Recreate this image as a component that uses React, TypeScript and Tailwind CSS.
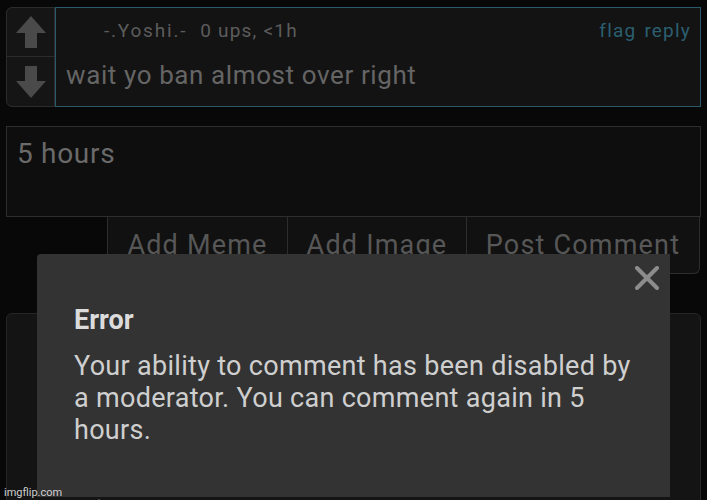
import React from "react";

function Arrow({ down }: { down?: boolean }) {
    return (
        <svg
            width="30"
            height="32"
            viewBox="0 0 30 32"
            className={down ? "rotate-180" : ""}
        >
            <path d="M15 0 L30 17 L21 17 L21 32 L9 32 L9 17 L0 17 Z" fill="#4a4a4a" />
        </svg>
    );
}

export default function App() {
    return (
        <div
            className="relative w-[707px] h-[500px] overflow-hidden bg-[#080808]"
            style={{ fontFamily: "Roboto, 'Liberation Sans', sans-serif" }}
        >
            {/* comment */}
            <div className="flex mx-[6px] mt-[7px] h-[100px]">
                <div className="w-[49px] flex flex-col border border-[#2c2c2c] rounded-l-md bg-[#151515]">
                    <div className="h-1/2 flex items-center justify-center border-b border-[#2c2c2c]">
                        <Arrow />
                    </div>
                    <div className="h-1/2 flex items-center justify-center">
                        <Arrow down />
                    </div>
                </div>
                <div className="flex-1 border border-[#2a5a69] bg-[#131313] flex flex-col">
                    <div className="flex items-center h-[47px] pl-[48px] pr-[9px] text-[19px] tracking-[1.2px] text-[#5c5c5c]">
                        <span className="tracking-[1.8px]">-.Yoshi.-</span>
                        <span className="ml-[13px]">0 ups, &lt;1h</span>
                        <span className="ml-auto text-[#2b5f70]">flag</span>
                        <span className="ml-[8px] text-[#2b5f70]">reply</span>
                    </div>
                    <div className="pl-[10px] pt-[5px] text-[26px] tracking-[0.6px] text-[#656565] leading-[30px]">
                        wait yo ban almost over right
                    </div>
                </div>
            </div>

            {/* textarea */}
            <div className="mx-[6px] mt-[19px] h-[91px] border border-[#2d2d2d] bg-[#0e0e0e] pl-[10px] pt-[11px] text-[28px] tracking-[0.7px] leading-[32px] text-[#6a6a6a]">
                5 hours
            </div>

            {/* buttons */}
            <div className="flex ml-[107px] mr-[7px] h-[57px] text-[27px] tracking-[1.2px] text-[#575757]">
                <div className="w-[180px] border-l border-b border-[#2d2d2d] bg-[#111111] flex items-center justify-center">
                    Add Meme
                </div>
                <div className="w-[179px] border-l border-b border-[#2d2d2d] bg-[#111111] flex items-center justify-center">
                    Add Image
                </div>
                <div className="flex-1 border-l border-r border-b border-[#2d2d2d] rounded-br-md bg-[#111111] flex items-center justify-center">
                    Post Comment
                </div>
            </div>

            {/* next panel */}
            <div className="mx-[6px] mt-[39px] h-[200px] border border-[#262626] rounded-t-md bg-[#141414] flex flex-col">
                <div className="mt-auto mb-[-14px] pl-[89px] text-[24px] text-[#555]">image stats</div>
            </div>

            {/* modal */}
            <div className="absolute left-[37px] top-[254px] w-[633px] h-[243px] bg-[#333333] rounded-tl-sm pl-[37px] pr-[30px]">
                <svg
                    width="26"
                    height="24"
                    viewBox="0 0 26 24"
                    className="absolute left-[597px] top-[12px]"
                >
                    <path d="M3 2 L23 22 M23 2 L3 22" stroke="#8c8c8c" strokeWidth="4" strokeLinecap="round" />
                </svg>
                <div className="mt-[50px] text-[27px] font-bold leading-[32px] text-[#dcdcdc]">Error</div>
                <div className="mt-[14px] w-[565px] text-[27px] tracking-[0.3px] leading-[32px] text-[#cfcfcf]">
                    Your ability to comment has been disabled by a moderator. You can comment again in 5 hours.
                </div>
            </div>

            <div className="absolute left-[4px] top-[485px] text-[11px] text-[#cfcfcf]">imgflip.com</div>
        </div>
    );
}
